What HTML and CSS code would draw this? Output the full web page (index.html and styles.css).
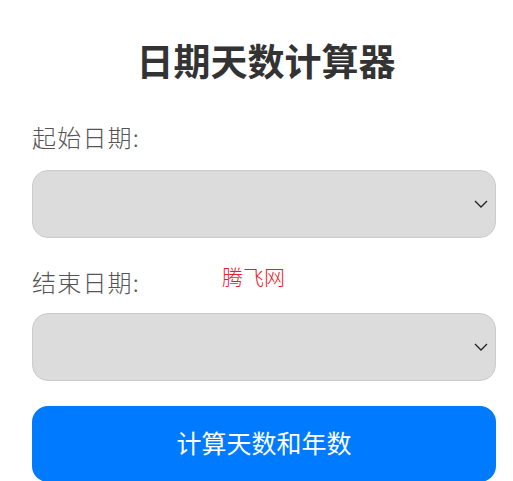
FILE: index.html
```html
<!DOCTYPE html>
<html lang="zh">
<head>
<meta charset="utf-8">
<link rel="stylesheet" href="styles.css">
</head>
<body>
<div class="container">
  <h1 class="title">日期天数计算器</h1>
  <label class="label">起始日期:</label>
  <div class="select">
    <svg class="chev" width="14" height="8" viewBox="0 0 14 8"><polyline points="1,1 7,7 13,1" fill="none" stroke="#222" stroke-width="1.3"/></svg>
  </div>
  <label class="label label-second">结束日期:</label>
  <div class="select select-last">
    <svg class="chev" width="14" height="8" viewBox="0 0 14 8"><polyline points="1,1 7,7 13,1" fill="none" stroke="#222" stroke-width="1.3"/></svg>
  </div>
  <button class="btn">计算天数和年数</button>
  <span class="watermark">腾飞网</span>
</div>
</body>
</html>
```

FILE: styles.css
```css
html, body {
  margin: 0;
  padding: 0;
  background: #fff;
}
body {
  font-family: "Noto Sans CJK SC", "Noto Sans", sans-serif;
}
.container {
  position: relative;
  padding: 34px 17px 0 32px;
  display: flex;
  flex-direction: column;
}
.title {
  margin: 0 0 34px 0;
  font-size: 37px;
  line-height: 52px;
  font-weight: 700;
  color: #333;
  text-align: center;
  padding-left: 4px;
}
.label {
  display: block;
  font-size: 24px;
  line-height: 34px;
  font-weight: 300;
  letter-spacing: 1.2px;
  color: #555;
  margin-bottom: 16px;
}
.label-second {
  margin-bottom: 14px;
}
.select {
  height: 66px;
  background: #dcdcdc;
  border: 1px solid #cccccc;
  border-radius: 16px;
  display: flex;
  align-items: center;
  justify-content: flex-end;
  padding-right: 7px;
  margin-bottom: 27px;
}
.select-last {
  margin-bottom: 25px;
}
.chev {
  display: block;
}
.btn {
  height: 76px;
  border: none;
  border-radius: 16px;
  background: #007bff;
  color: #fff;
  font-family: "Noto Sans CJK SC", "Noto Sans", sans-serif;
  font-size: 25px;
  line-height: 34px;
  padding: 0 0 4px 0;
}
.watermark {
  position: absolute;
  left: 222px;
  top: 261px;
  font-size: 21px;
  line-height: 30px;
  font-weight: 300;
  color: #ec1a2e;
}
```
